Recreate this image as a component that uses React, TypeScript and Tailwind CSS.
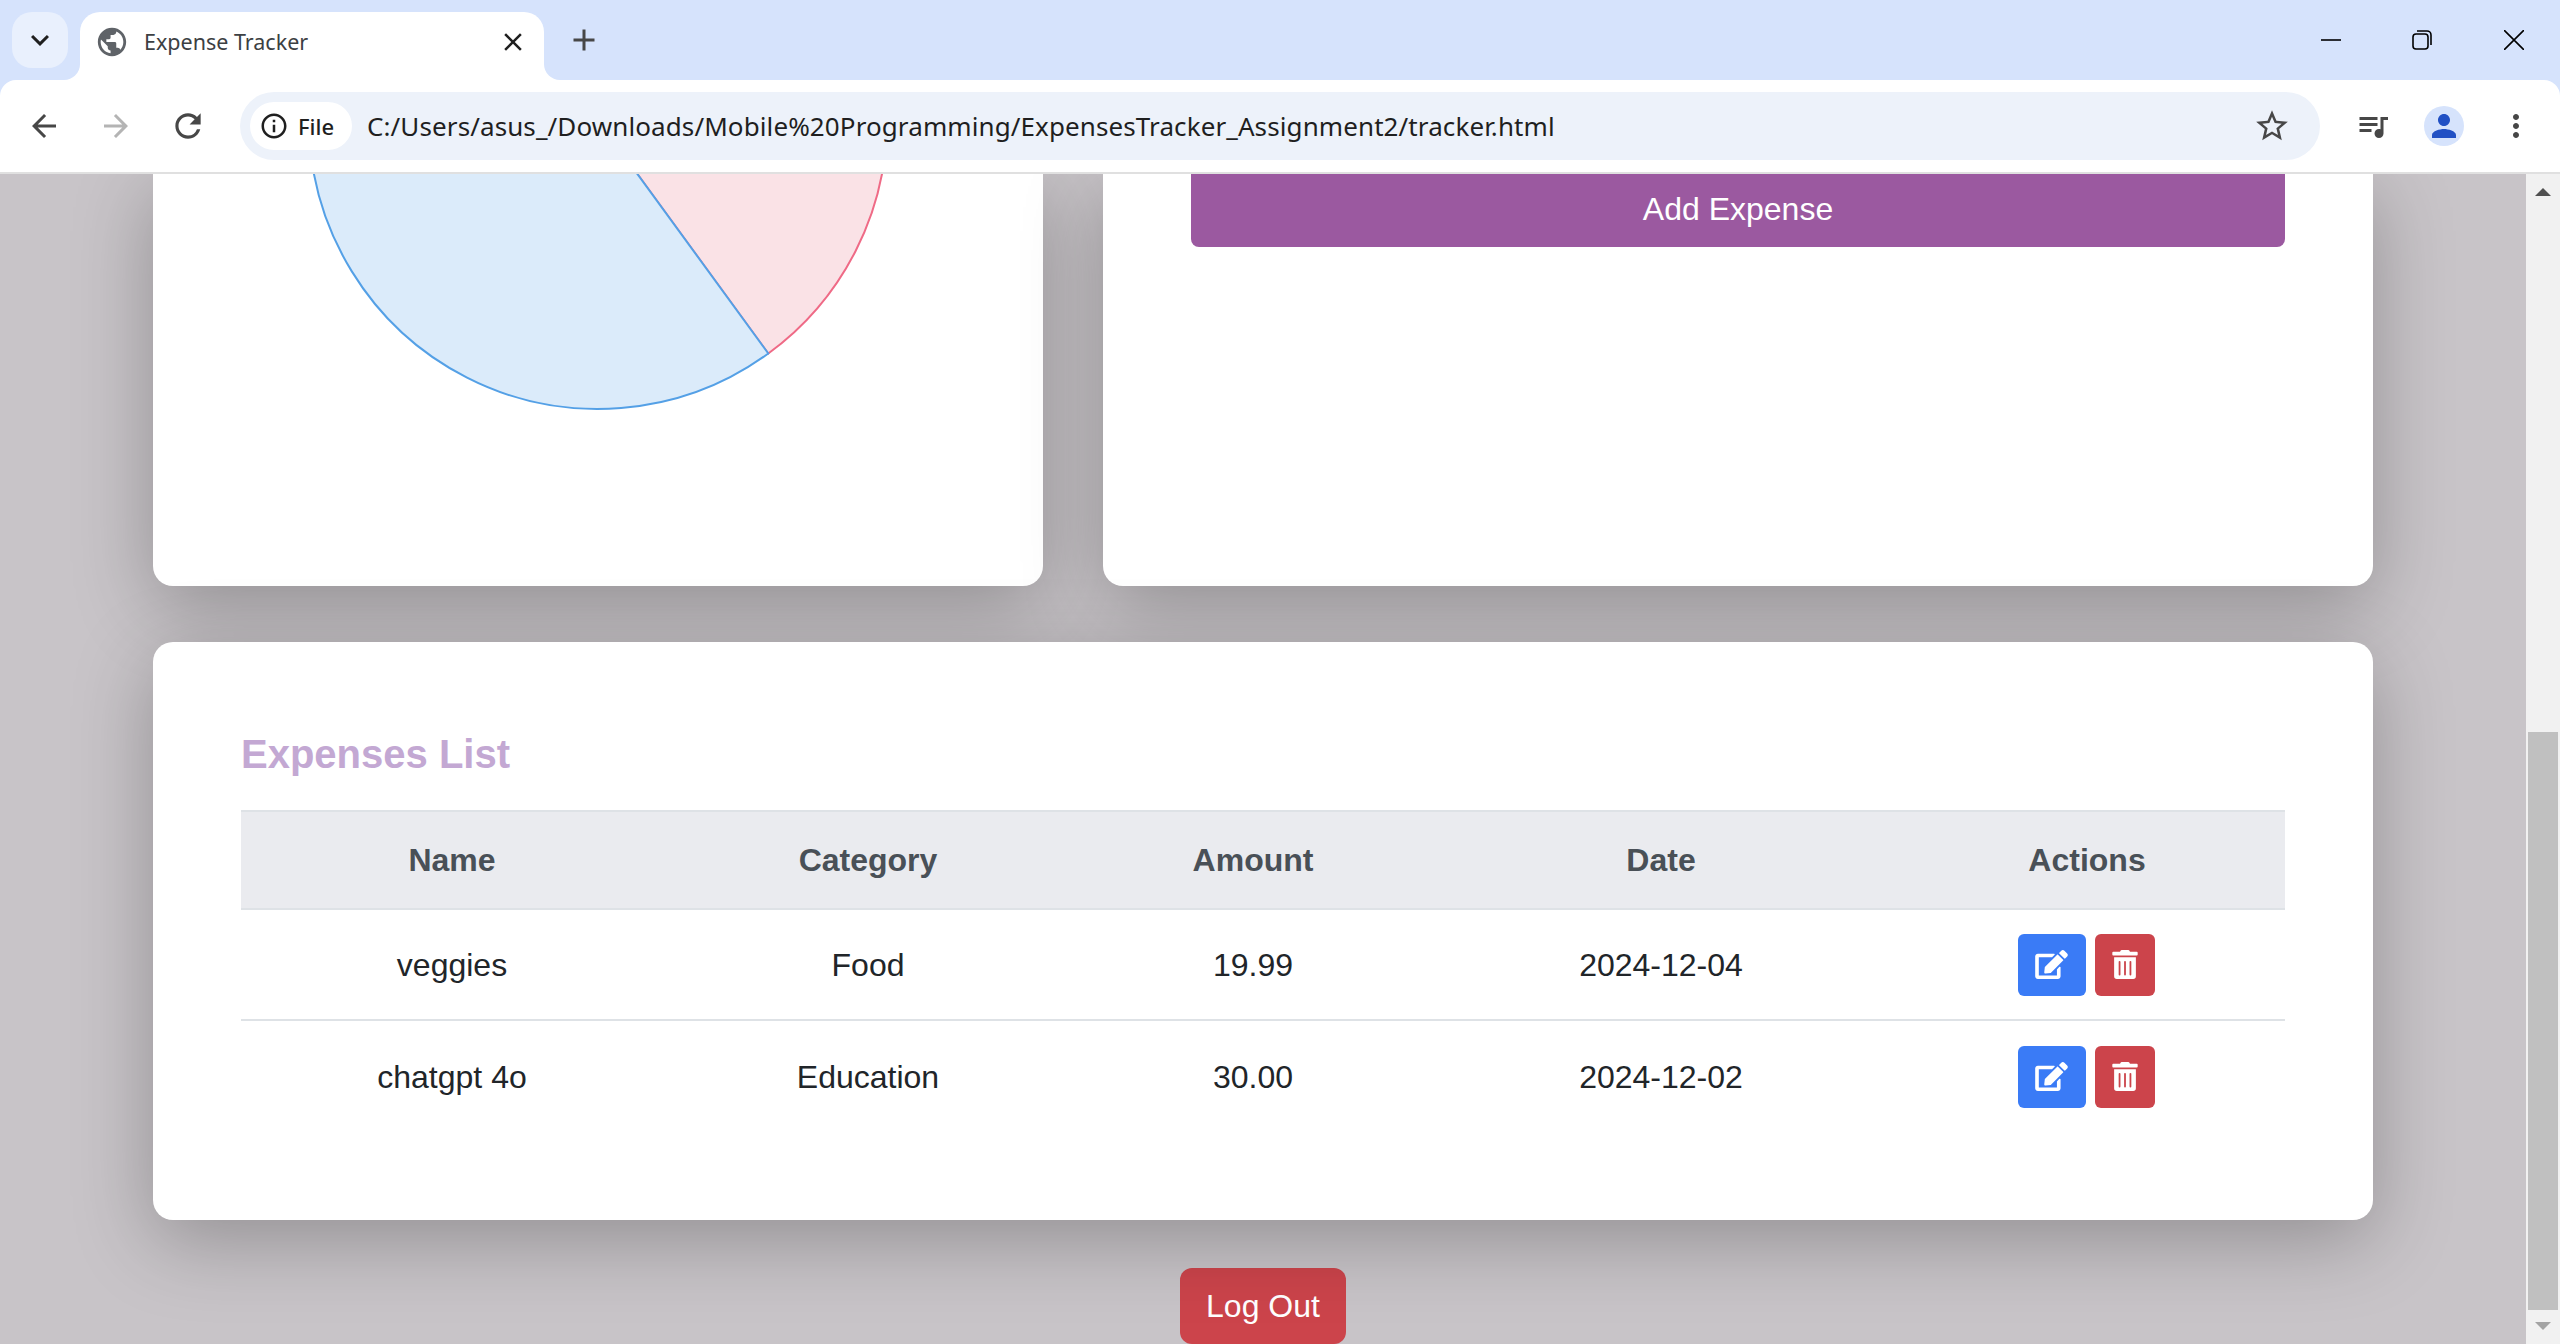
import { FaEdit, FaTrashAlt } from 'react-icons/fa'
import {
  MdAdd,
  MdArrowBack,
  MdArrowForward,
  MdClose,
  MdInfoOutline,
  MdKeyboardArrowDown,
  MdMoreVert,
  MdPerson,
  MdPublic,
  MdQueueMusic,
  MdRefresh,
  MdStarBorder,
} from 'react-icons/md'

const expenses = [
  { name: 'veggies', category: 'Food', amount: '19.99', date: '2024-12-04' },
  { name: 'chatgpt 4o', category: 'Education', amount: '30.00', date: '2024-12-02' },
]

function TabBar() {
  return (
    <div className="flex h-20 items-end bg-[#d6e3fc] pl-3">
      <div className="mb-3 flex h-14 w-14 items-center justify-center rounded-[20px] bg-[#e9f0fd] text-[#1f1f1f]">
        <MdKeyboardArrowDown className="h-9 w-9" />
      </div>
      {/* Active tab */}
      <div className="relative ml-3 flex h-[68px] w-[464px] items-center rounded-t-[20px] bg-white pb-2 pl-[15px] pr-[16px]">
        <div className="absolute bottom-0 left-[-16px] h-4 w-4 bg-white">
          <div className="h-full w-full rounded-br-[16px] bg-[#d6e3fc]" />
        </div>
        <div className="absolute bottom-0 right-[-16px] h-4 w-4 bg-white">
          <div className="h-full w-full rounded-bl-[16px] bg-[#d6e3fc]" />
        </div>
        <MdPublic className="h-[34px] w-[34px] text-[#5f6368]" />
        <span className="ml-[15px] flex-1 font-['Noto_Sans'] text-[21.5px] text-[#3c4043]">Expense Tracker</span>
        <MdClose className="h-[30px] w-[30px] text-[#1f1f1f]" />
      </div>
      <div className="mb-3 ml-[12px] flex h-14 w-14 items-center justify-center text-[#474747]">
        <MdAdd className="h-[36px] w-[36px]" />
      </div>
      <div className="ml-auto flex h-full items-start pt-[30px] text-black">
        {/* Window controls */}
        <svg className="h-5 w-5" viewBox="0 0 20 20" fill="none" stroke="currentColor" strokeWidth="1.6">
          <path d="M0 10h20" />
        </svg>
        <svg className="ml-[71px] h-5 w-5" viewBox="0 0 20 20" fill="none" stroke="currentColor" strokeWidth="1.6">
          <rect x="1" y="4" width="15" height="15" rx="3" />
          <path d="M5 1h10a4 4 0 0 1 4 4v10" />
        </svg>
        <svg className="ml-[72px] mr-9 h-5 w-5" viewBox="0 0 20 20" fill="none" stroke="currentColor" strokeWidth="1.6">
          <path d="M0 0l20 20M20 0L0 20" />
        </svg>
      </div>
    </div>
  )
}

function Toolbar() {
  return (
    <div className="bg-[#d6e3fc]">
      <div className="flex h-[94px] items-start rounded-t-[16px] border-b-2 border-[#e0e0e0] bg-white pt-3">
        <div className="flex h-[68px] w-[240px] items-center pl-[26px] text-[#474747]">
          <MdArrowBack className="h-[36px] w-[36px]" />
          <MdArrowForward className="ml-[36px] h-[36px] w-[36px] text-[#b4b4b4]" />
          <MdRefresh className="ml-[35px] h-[38px] w-[38px]" />
        </div>
        <div className="flex h-[68px] w-[2080px] items-center rounded-full bg-[#edf2fa] pl-[10px] pr-[29px]">
          <div className="flex h-12 w-[102px] items-center rounded-full bg-white pl-[9px] text-[#1f1f1f]">
            <MdInfoOutline className="h-[30px] w-[30px]" />
            <span className="ml-[9px] font-['Noto_Sans'] text-[22px] font-medium">File</span>
          </div>
          <span className="ml-[15px] flex-1 font-['Noto_Sans'] text-[26px] tracking-[0.1px] text-[#1f1f1f]">
            C:/Users/asus_/Downloads/Mobile%20Programming/ExpensesTracker_Assignment2/tracker.html
          </span>
          <MdStarBorder className="h-[38px] w-[38px] text-[#474747]" />
        </div>
        <div className="flex h-[68px] flex-1 items-center text-[#474747]">
          <MdQueueMusic className="ml-[35px] h-[36px] w-[36px]" />
          <div className="ml-[33px] flex h-10 w-10 items-center justify-center rounded-full bg-[#d6e3fc]">
            <MdPerson className="h-[36px] w-[36px] text-[#2150c4]" />
          </div>
          <MdMoreVert className="ml-[34px] h-[36px] w-[36px]" />
        </div>
      </div>
    </div>
  )
}

function Scrollbar() {
  return (
    <div className="flex h-full w-[34px] flex-col items-center bg-[#f1f1f1] pt-[14px]">
      <svg className="h-2 w-4" viewBox="0 0 16 8" fill="#505050">
        <path d="M8 0l8 8H0z" />
      </svg>
      <div className="mt-[536px] h-[578px] w-[30px] bg-[#c0c0c0]" />
      <svg className="mt-3 h-2 w-4" viewBox="0 0 16 8" fill="#a3a3a3">
        <path d="M0 0h16L8 8z" />
      </svg>
    </div>
  )
}

function ChartCard() {
  return (
    <div className="h-[412px] w-[890px] rounded-b-[20px] bg-white shadow-[0_20px_80px_rgba(0,0,0,0.27)]">
      <svg className="block h-[240px] w-[890px]" viewBox="0 0 890 240">
        <path
          d="M445 -54L734 -54A289 289 0 0 1 615.3 179.5Z"
          fill="#fae2e6"
          stroke="#ef6a86"
          strokeWidth="2"
        />
        <path
          d="M445 -54L615.3 179.5A289 289 0 0 1 156 -54Z"
          fill="#dbebfa"
          stroke="#54a0e6"
          strokeWidth="2"
        />
      </svg>
    </div>
  )
}

function FormCard() {
  return (
    <div className="h-[412px] w-[1270px] rounded-b-[20px] bg-white pl-[88px] pr-[88px] shadow-[0_20px_80px_rgba(0,0,0,0.27)]">
      <button className="h-[73px] w-full rounded-b-[8px] bg-[#9b59a0] pb-[3px] text-[32px] text-white">
        Add Expense
      </button>
    </div>
  )
}

function ExpensesCard() {
  return (
    <div className="relative z-10 mt-14 h-[578px] w-[2220px] rounded-[20px] bg-white pl-[88px] pr-[88px] pt-[88px] shadow-[0_20px_80px_rgba(0,0,0,0.27)]">
      <h2 className="mb-[32px] text-[40px] leading-[48px] font-bold text-[#c3a8d3]">Expenses List</h2>
      <table className="w-[2044px] table-fixed border-collapse text-center text-[32px]">
        <thead>
          <tr className="h-[98px] border-y-2 border-[#dee2e6] bg-[#eaebef] text-[#495057]">
            <th className="w-[422px] font-bold">Name</th>
            <th className="w-[410px] font-bold">Category</th>
            <th className="w-[360px] font-bold">Amount</th>
            <th className="w-[456px] font-bold">Date</th>
            <th className="w-[396px] font-bold">Actions</th>
          </tr>
        </thead>
        <tbody className="text-[#212529]">
          {expenses.map((item, i) => (
            <tr key={item.name} className={i === 0 ? 'h-[111px] border-b-2 border-[#dee2e6]' : 'h-[112px]'}>
              <td>{item.name}</td>
              <td>{item.category}</td>
              <td>{item.amount}</td>
              <td>{item.date}</td>
              <td>
                <div className="flex justify-center gap-[9px] pr-[2px]">
                  <button className="flex h-[62px] w-[68px] items-center justify-center rounded-[6px] bg-[#3a7bf6] text-white">
                    <FaEdit className="h-[29px] w-[33px]" />
                  </button>
                  <button className="flex h-[62px] w-[60px] items-center justify-center rounded-[6px] bg-[#cc444b] text-white">
                    <FaTrashAlt className="h-[29px] w-[26px]" />
                  </button>
                </div>
              </td>
            </tr>
          ))}
        </tbody>
      </table>
    </div>
  )
}

export default function App() {
  return (
    <div className="flex h-[1344px] w-[2560px] flex-col overflow-hidden bg-white font-['Liberation_Sans',sans-serif]">
      <TabBar />
      <Toolbar />
      <div className="flex h-[1170px]">
        <div className="flex h-full w-[2526px] flex-col items-center overflow-hidden bg-[#c8c4c8] px-[153px]">
          <div className="flex gap-[60px]">
            <ChartCard />
            <FormCard />
          </div>
          <ExpensesCard />
          <button className="mt-12 h-[76px] w-[166px] shrink-0 rounded-[12px] bg-[#cc444b] text-[32px] text-white">
            Log Out
          </button>
        </div>
        <Scrollbar />
      </div>
    </div>
  )
}
